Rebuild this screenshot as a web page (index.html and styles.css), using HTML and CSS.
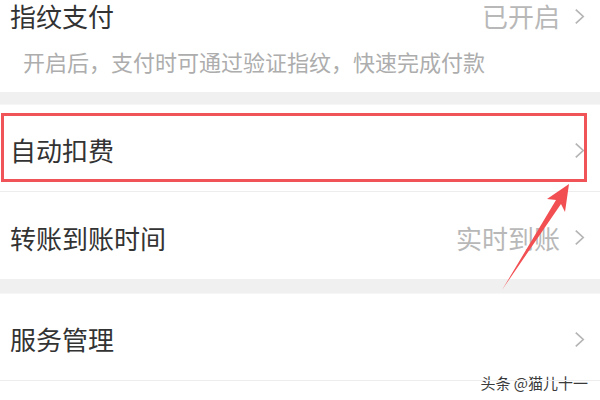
FILE: index.html
```html
<!DOCTYPE html>
<html lang="zh">
<head>
<meta charset="utf-8">
<link rel="stylesheet" href="styles.css">
</head>
<body>
<div class="page">
  <div class="card first">
    <div class="row-top">
      <span class="title">指纹支付</span>
      <span class="value">已开启<svg class="chev" viewBox="0 0 10 16"><path d="M1.5 1.5 L8.5 8 L1.5 14.5"/></svg></span>
    </div>
    <div class="desc">开启后，支付时可通过验证指纹，快速完成付款</div>
  </div>
  <div class="band band1"></div>
  <div class="card">
    <div class="row divided">
      <span class="title">自动扣费</span>
      <span class="value"><svg class="chev" viewBox="0 0 10 16"><path d="M1.5 1.5 L8.5 8 L1.5 14.5"/></svg></span>
    </div>
    <div class="row">
      <span class="title">转账到账时间</span>
      <span class="value">实时到账<svg class="chev" viewBox="0 0 10 16"><path d="M1.5 1.5 L8.5 8 L1.5 14.5"/></svg></span>
    </div>
  </div>
  <div class="band band2"></div>
  <div class="card">
    <div class="row divided">
      <span class="title">服务管理</span>
      <span class="value"><svg class="chev" viewBox="0 0 10 16"><path d="M1.5 1.5 L8.5 8 L1.5 14.5"/></svg></span>
    </div>
  </div>
  <div class="footer"><span class="mark">头条 @猫儿十一</span></div>

  <div class="highlight"></div>
  <svg class="arrow" viewBox="0 0 600 400" width="600" height="400">
    <polygon points="569,184 547,199 556,200 502,290 561,204 565,212"/>
  </svg>
</div>
</body>
</html>
```
FILE: styles.css
```css
html, body {
  margin: 0;
  padding: 0;
  background: #ffffff;
}
.page {
  position: relative;
  width: 600px;
  height: 400px;
  overflow: hidden;
  font-family: "Noto Sans CJK SC", "Noto Sans", sans-serif;
  color: #333333;
  background: #ffffff;
}
.card {
  background: #ffffff;
}
.first {
  padding: 0 0 20px 0;
}
.row-top {
  height: 32px;
  display: flex;
  align-items: center;
  justify-content: space-between;
  padding: 0 15px 0 10px;
}
.title {
  font-size: 26px;
  line-height: 30px;
  color: #333333;
}
.value {
  display: flex;
  align-items: center;
  gap: 14px;
  font-size: 26px;
  line-height: 30px;
  color: #b8b8b8;
}
.chev {
  width: 11px;
  height: 17px;
  fill: none;
  stroke: #b5b5b5;
  stroke-width: 1.6;
}
.desc {
  margin-top: 18px;
  padding-left: 23px;
  font-size: 22px;
  line-height: 22px;
  color: #adadad;
}
.band {
  background: #f0f0f0;
  border-bottom: 1px solid #f6f6f6;
}
.band1 {
  height: 12px;
}
.band2 {
  height: 14px;
}
.row {
  position: relative;
  height: 87px;
  box-sizing: border-box;
  padding: 4px 15px 0 10px;
  display: flex;
  align-items: center;
  justify-content: space-between;
}
.row.divided {
  border-bottom: 1px solid #ededed;
}
.footer {
  height: 20px;
  display: flex;
  justify-content: flex-end;
  align-items: flex-start;
  padding-right: 12px;
}
.mark {
  margin-top: -6px;
  font-size: 15px;
  line-height: 16px;
  color: #3a3a3a;
  text-shadow: 0 0 2px #ffffff, 0 0 2px #ffffff;
}
.highlight {
  position: absolute;
  left: 1px;
  top: 113px;
  width: 580px;
  height: 63px;
  border: 3px solid #f05358;
}
.arrow {
  position: absolute;
  left: 0;
  top: 0;
  fill: #f24f53;
}
```
